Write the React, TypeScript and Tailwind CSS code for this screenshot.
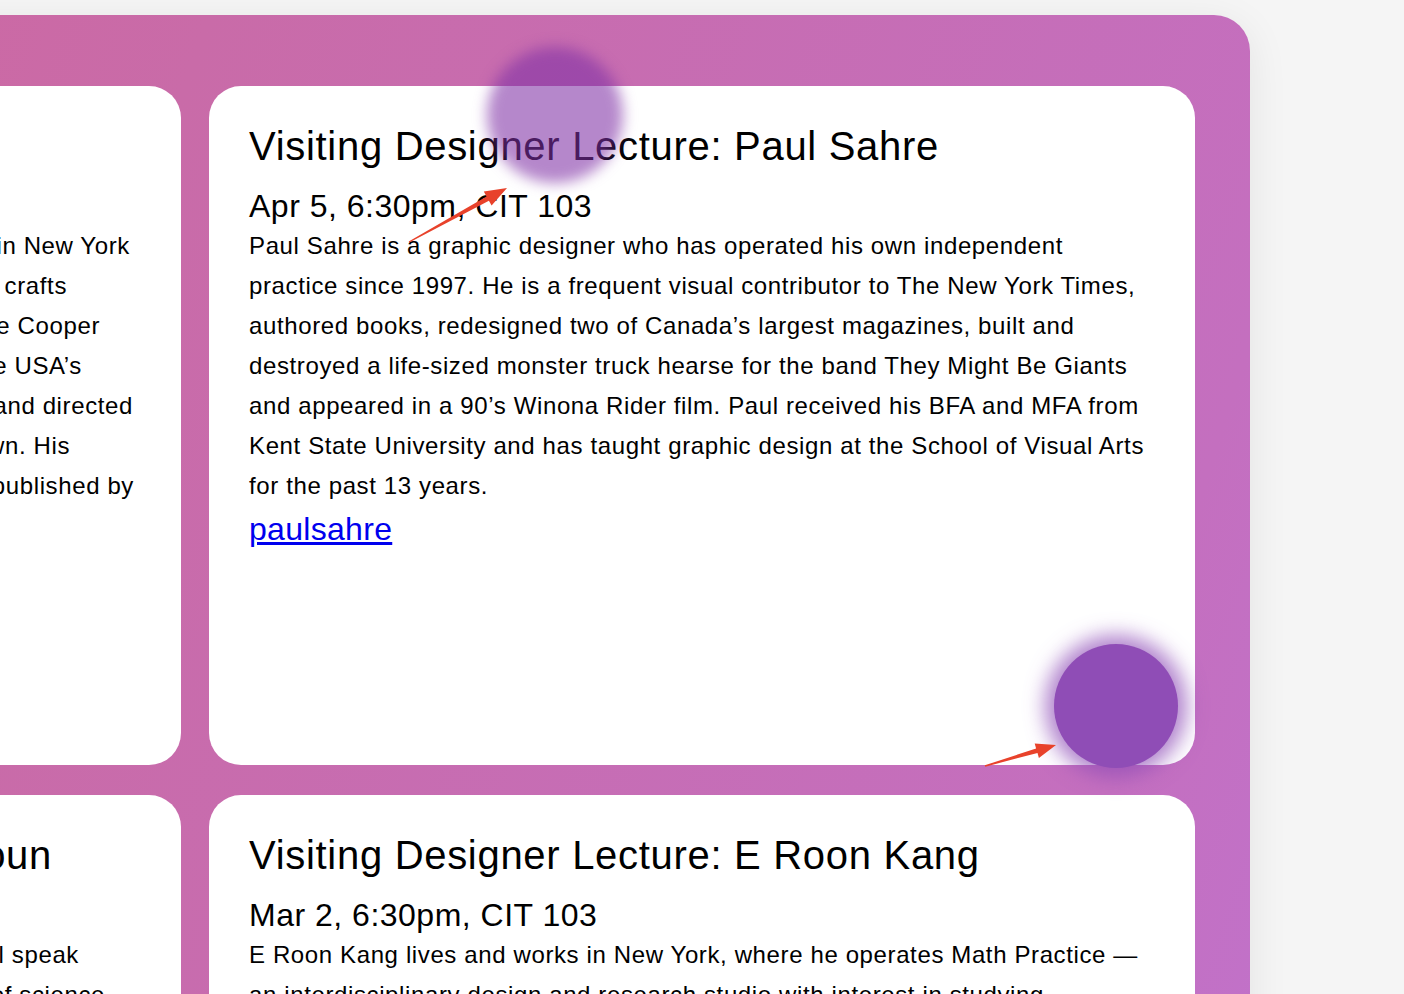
import React from "react";

type Line = { text: string; pad: string };

const sahreLines = [
  "Paul Sahre is a graphic designer who has operated his own independent",
  "practice since 1997. He is a frequent visual contributor to The New York Times,",
  "authored books, redesigned two of Canada’s largest magazines, built and",
  "destroyed a life-sized monster truck hearse for the band They Might Be Giants",
  "and appeared in a 90’s Winona Rider film. Paul received his BFA and MFA from",
  "Kent State University and has taught graphic design at the School of Visual Arts",
  "for the past 13 years.",
];

const kangLines = [
  "E Roon Kang lives and works in New York, where he operates Math Practice —",
  "an interdisciplinary design and research studio with interest in studying",
  "the relationship between computation, typography and visual communication.",
];

// left column is scrolled mostly out of view, only the line endings show
const leftTopLines: Line[] = [
  { text: "A designer, writer and educator who lives and works in New York", pad: "pr-[11px]" },
  { text: "City, where she runs a studio devoted to print and digital crafts", pad: "pr-[74px]" },
  { text: "and teaches typography in the graduate program at The Cooper", pad: "pr-[41px]" },
  { text: "Union. Her work has been shown in exhibitions across the USA’s", pad: "pr-[59px]" },
  { text: "major museums, and she has founded, edited, and directed", pad: "pr-[8px]" },
  { text: "several independent magazines of her own. His", pad: "pr-[71px]" },
  { text: "latest book on the history of letterforms was published by", pad: "pr-[7px]" },
];

const leftBottomLines: Line[] = [
  { text: "On the occasion of the spring lecture series, she will speak", pad: "pr-[62px]" },
  { text: "about design at the intersection of science", pad: "pr-[36px]" },
];

const titleCls = "text-[40px] leading-[46px] tracking-[0.7px] whitespace-nowrap";
const dateCls = "mt-[19px] text-[32px] leading-[37px] tracking-[0.5px] whitespace-nowrap";
const bodyCls = "mt-[1px] text-[24px] leading-[40px] tracking-[0.62px]";

function EventCard({
  title,
  date,
  lines,
  link,
}: {
  title: string;
  date: string;
  lines: string[];
  link?: string;
}) {
  return (
    <div className="h-[679px] overflow-hidden rounded-[32px] bg-white px-[40px] pt-[37px]">
      <h2 className={titleCls}>{title}</h2>
      <p className={dateCls}>{date}</p>
      <p className={bodyCls}>
        {lines.map((l) => (
          <span key={l} className="block whitespace-nowrap">
            {l}
          </span>
        ))}
      </p>
      {link && (
        <a href="#" className="mt-[5px] block text-[32px] leading-[37px] tracking-[0.3px] text-[#0000ee] underline">
          {link}
        </a>
      )}
    </div>
  );
}

function CutCard({
  title,
  titlePad,
  lines,
}: {
  title: string;
  titlePad?: string;
  lines: Line[];
}) {
  return (
    <div className="h-[679px] overflow-hidden rounded-[32px] bg-white px-[40px] pt-[37px]">
      <h2 className={`${titleCls} ${titlePad ? "text-right " + titlePad : ""}`}>{title}</h2>
      <p className={dateCls}>Feb 16, 6:30pm, CIT 103</p>
      <div className={bodyCls}>
        {lines.map((l) => (
          <div key={l.text} className={`whitespace-nowrap text-right ${l.pad}`}>
            {l.text}
          </div>
        ))}
      </div>
    </div>
  );
}

function Arrows() {
  return (
    <svg className="pointer-events-none absolute left-0 top-0" width="1404" height="994">
      <polygon
        fill="#e8422b"
        points="409.3,242.6 488.9,200.8 491.6,205.6 507,188 483.8,191.6 486.5,196.4 408.7,241.4"
      />
      <polygon
        fill="#e8422b"
        points="985.2,766.7 1037.5,752.9 1038.9,757.9 1056,745 1034.7,743.5 1036.1,748.5 984.8,765.3"
      />
    </svg>
  );
}

export default function App() {
  return (
    <div className="relative h-screen overflow-hidden bg-[#f5f5f5] pt-[15px] font-['Liberation_Sans',Arial,sans-serif] text-black">
      <div className="ml-[-860px] w-[2110px] rounded-[36px] bg-[linear-gradient(108deg,#d3649a_0%,#c96ba8_41%,#c46fbf_85%,#bf73cf_100%)] px-[55px] pb-[71px] pt-[71px] shadow-[0_8px_40px_rgba(0,0,0,0.08)]">
        <div className="grid grid-cols-2 gap-x-[28px] gap-y-[30px]">
          <CutCard title="Visiting Designer Lecture: Ana Ruiz" lines={leftTopLines} />
          <EventCard
            title="Visiting Designer Lecture: Paul Sahre"
            date="Apr 5, 6:30pm, CIT 103"
            lines={sahreLines}
            link="paulsahre"
          />
          <CutCard
            title="Visiting Designer Lecture: Dori Calhoun"
            titlePad="pr-[89px]"
            lines={leftBottomLines}
          />
          <EventCard
            title="Visiting Designer Lecture: E Roon Kang"
            date="Mar 2, 6:30pm, CIT 103"
            lines={kangLines}
          />
        </div>
      </div>

      <div className="pointer-events-none absolute left-[487px] top-[47px] h-[136px] w-[136px] rounded-full bg-[rgba(128,48,165,0.58)] blur-[7px]" />
      <div className="pointer-events-none absolute left-[1054px] top-[644px] h-[124px] w-[124px] rounded-full bg-[#8f4db6] shadow-[0_0_20px_9px_rgba(143,77,182,0.7)]" />
      <Arrows />
    </div>
  );
}
